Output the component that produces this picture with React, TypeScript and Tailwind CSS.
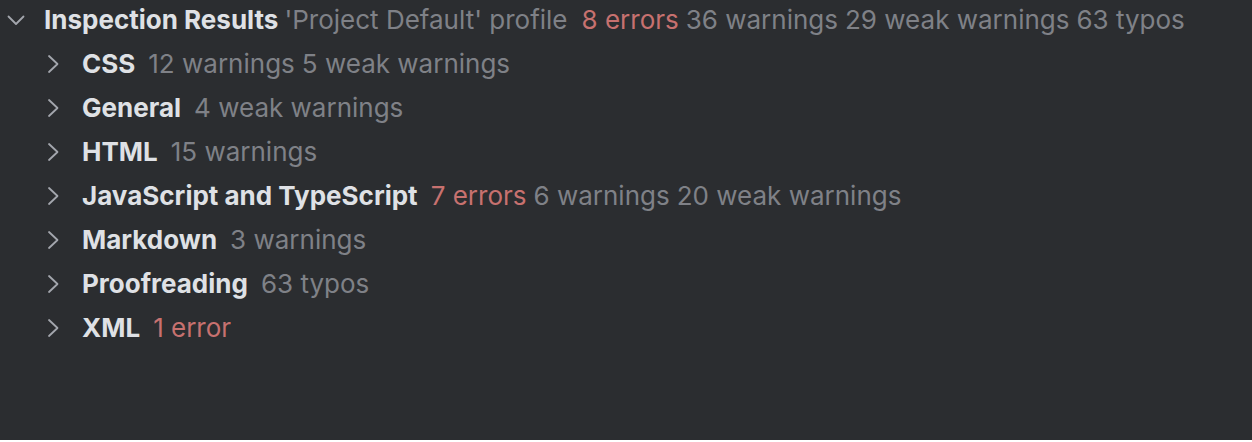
import React from "react";

type Count = { text: string; error?: boolean };

const GROUPS: { name: string; counts: Count[] }[] = [
  { name: "CSS", counts: [{ text: "12 warnings" }, { text: "5 weak warnings" }] },
  { name: "General", counts: [{ text: "4 weak warnings" }] },
  { name: "HTML", counts: [{ text: "15 warnings" }] },
  {
    name: "JavaScript and TypeScript",
    counts: [{ text: "7 errors", error: true }, { text: "6 warnings" }, { text: "20 weak warnings" }],
  },
  { name: "Markdown", counts: [{ text: "3 warnings" }] },
  { name: "Proofreading", counts: [{ text: "63 typos" }] },
  { name: "XML", counts: [{ text: "1 error", error: true }] },
];

function ChevronDown() {
  return (
    <svg width="18" height="12" viewBox="0 0 18 12" fill="none" className="text-[#a3a6ad]">
      <path d="M1.5 2.5L9 10L16.5 2.5" stroke="currentColor" strokeWidth="1.8" strokeLinecap="round" strokeLinejoin="round" />
    </svg>
  );
}

function ChevronRight() {
  return (
    <svg width="12" height="20" viewBox="0 0 12 20" fill="none" className="text-[#a3a6ad]">
      <path d="M2 2L10.5 10L2 18" stroke="currentColor" strokeWidth="1.8" strokeLinecap="round" strokeLinejoin="round" />
    </svg>
  );
}

function Counts({ counts }: { counts: Count[] }) {
  return (
    <span className="flex gap-[7px]">
      {counts.map((c) => (
        <span key={c.text} className={c.error ? "text-[#c7716f]" : "text-[#7f8187]"}>
          {c.text}
        </span>
      ))}
    </span>
  );
}

export default function App() {
  return (
    <div
      className="h-[442px] w-[1252px] bg-[#2b2d30] text-[26px] leading-none"
      style={{ fontFamily: "Inter, 'Noto Sans', sans-serif" }}
    >
      <div className="-mt-[2px] flex flex-col">
        <div className="flex h-[44px] items-center">
          <div className="flex w-[44px] justify-start pl-[7px]">
            <ChevronDown />
          </div>
          <span className="font-bold text-[#dfe1e5]">Inspection Results</span>
          <span className="ml-[6px] text-[#7f8187]">'Project Default' profile</span>
          <span className="ml-[14px]">
            <Counts
              counts={[
                { text: "8 errors", error: true },
                { text: "36 warnings" },
                { text: "29 weak warnings" },
                { text: "63 typos" },
              ]}
            />
          </span>
        </div>
        {GROUPS.map((g) => (
          <div key={g.name} className="flex h-[44px] items-center">
            <div className="flex w-[82px] justify-start pl-[47px]">
              <ChevronRight />
            </div>
            <span className="font-bold text-[#dfe1e5]">{g.name}</span>
            <span className="ml-[13px]">
              <Counts counts={g.counts} />
            </span>
          </div>
        ))}
      </div>
    </div>
  );
}
